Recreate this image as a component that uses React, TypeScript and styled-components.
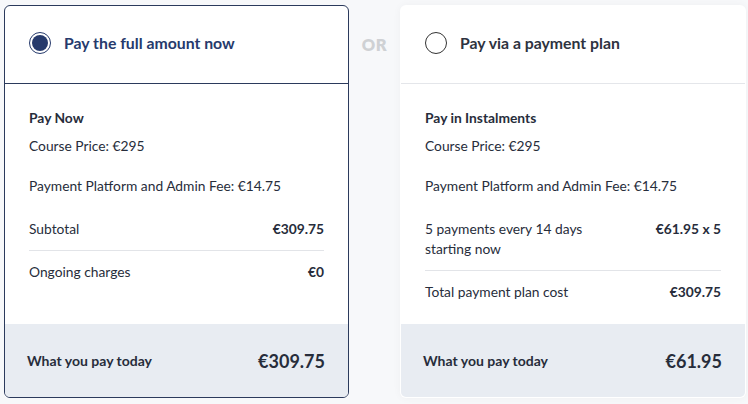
import React from "react";
import styled, { createGlobalStyle } from "styled-components";

const Global = createGlobalStyle`
  html, body { margin: 0; padding: 0; background: #f7f8fa; }
  body { font-family: Lato, "Open Sans", sans-serif; color: #272d3b; }
  * { box-sizing: border-box; }
`;

const Page = styled.div`
  display: grid;
  grid-template-columns: 345px 51px 346px;
  padding: 5px 0 0 4px;
  height: 404px;
`;

const Card = styled.div<{ $selected?: boolean }>`
  height: 393px;
  background: #fff;
  border-radius: 6px;
  overflow: hidden;
  display: flex;
  flex-direction: column;
  border: ${(p) => (p.$selected ? "1px solid #2b3a5c" : "1px solid transparent")};
  box-shadow: ${(p) => (p.$selected ? "none" : "0 0 8px rgba(0,0,0,0.04)")};
`;

const Header = styled.div<{ $selected?: boolean }>`
  height: 78px;
  display: flex;
  align-items: center;
  gap: 13px;
  padding: 0 0 4px 24px;
  border-bottom: 1px solid ${(p) => (p.$selected ? "#2b3a5c" : "#e4e6ea")};
  font-size: 15.8px;
  font-weight: 700;
  color: ${(p) => (p.$selected ? "#263a6c" : "#2e3340")};
`;

const Radio = styled.span<{ $checked?: boolean }>`
  width: 22px;
  height: 22px;
  border-radius: 50%;
  border: 1.5px solid ${(p) => (p.$checked ? "#263a6c" : "#333")};
  display: flex;
  align-items: center;
  justify-content: center;
  &::after {
    content: "";
    display: ${(p) => (p.$checked ? "block" : "none")};
    width: 16px;
    height: 16px;
    border-radius: 50%;
    background: #263a6c;
  }
`;

const Body = styled.div`
  flex: 1;
  padding: 24px 24px 0 24px;
  font-size: 13.8px;
`;

const Title = styled.div`
  font-weight: 700;
  font-size: 13.8px;
  line-height: 20px;
  margin-bottom: 8px;
`;

const Line = styled.div`
  line-height: 20px;
  margin-bottom: 20px;
  & + & {
    margin-bottom: 23px;
  }
`;

const Row = styled.div<{ $divider?: boolean }>`
  display: flex;
  justify-content: space-between;
  align-items: flex-start;
  line-height: 20px;
  padding: 0 0 ${(p) => (p.$divider ? "11px" : "0")};
  margin-bottom: ${(p) => (p.$divider ? "11px" : "0")};
  border-bottom: ${(p) => (p.$divider ? "1px solid #e2e4e8" : "none")};
`;

const Value = styled.span`
  font-weight: 700;
  white-space: nowrap;
`;

const Footer = styled.div`
  height: 73px;
  background: #e8ecf2;
  display: flex;
  align-items: center;
  justify-content: space-between;
  padding: 0 23px 0 22px;
`;

const FooterLabel = styled.span`
  font-weight: 700;
  font-size: 14px;
`;

const FooterValue = styled.span`
  font-weight: 700;
  font-size: 18px;
`;

const Or = styled.div`
  display: flex;
  justify-content: center;
  padding-top: 30px;
  font-weight: 800;
  font-size: 16.5px;
  color: #cfd1d4;
  letter-spacing: 0.5px;
`;

export default function App() {
  return (
    <>
      <Global />
      <Page>
        <Card $selected>
          <Header $selected>
            <Radio $checked />
            Pay the full amount now
          </Header>
          <Body>
            <Title>Pay Now</Title>
            <Line>Course Price: €295</Line>
            <Line>Payment Platform and Admin Fee: €14.75</Line>
            <Row $divider>
              <span>Subtotal</span>
              <Value>€309.75</Value>
            </Row>
            <Row>
              <span>Ongoing charges</span>
              <Value>€0</Value>
            </Row>
          </Body>
          <Footer>
            <FooterLabel>What you pay today</FooterLabel>
            <FooterValue>€309.75</FooterValue>
          </Footer>
        </Card>
        <Or>OR</Or>
        <Card>
          <Header>
            <Radio />
            Pay via a payment plan
          </Header>
          <Body>
            <Title>Pay in Instalments</Title>
            <Line>Course Price: €295</Line>
            <Line>Payment Platform and Admin Fee: €14.75</Line>
            <Row $divider>
              <span>
                5 payments every 14 days
                <br />
                starting now
              </span>
              <Value>€61.95 x 5</Value>
            </Row>
            <Row>
              <span>Total payment plan cost</span>
              <Value>€309.75</Value>
            </Row>
          </Body>
          <Footer>
            <FooterLabel>What you pay today</FooterLabel>
            <FooterValue>€61.95</FooterValue>
          </Footer>
        </Card>
      </Page>
    </>
  );
}
